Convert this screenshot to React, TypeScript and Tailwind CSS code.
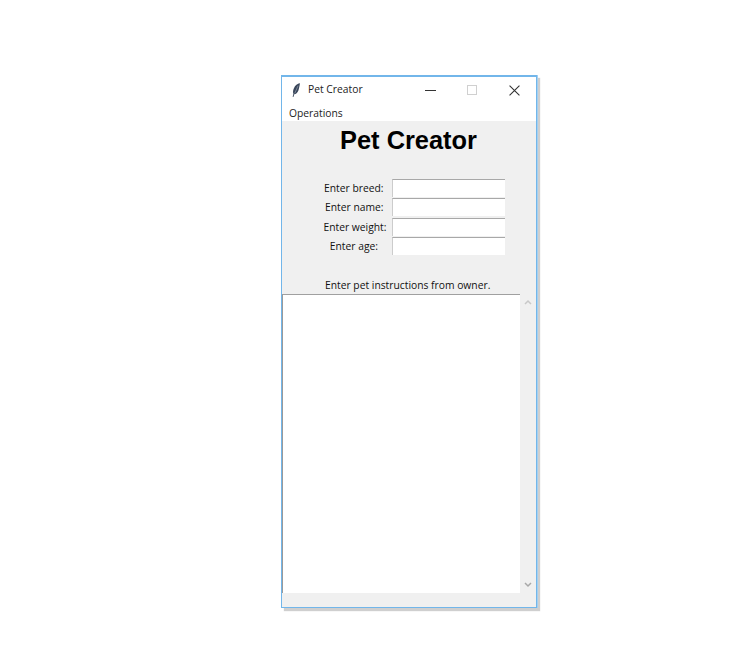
const ui = { fontFamily: '"Open Sans", "Noto Sans", sans-serif' };

function Field({ label, offset }: { label: string; offset: string }) {
  return (
    <div className="flex h-[19.5px] items-center">
      <div className="relative w-[111px] text-right text-[10.3px] leading-none text-[#111]">
        <span className={offset}>{label}</span>
      </div>
      <div className="ml-[-1px] h-[18px] w-[113px] border-t border-l border-t-[#a8a8a8] border-l-[#cccccc] bg-white" />
    </div>
  );
}

export default function App() {
  return (
    <div className="h-[654px] w-[756px] overflow-hidden bg-white pt-[75px] pl-[281px]" style={ui}>
      <div className="flex h-[533px] w-[256px] flex-col border border-t-2 border-[#72b6ea] bg-white shadow-[1px_0_0_#a5d0f0,3px_3px_1px_rgba(130,130,130,0.38)]">
        <div className="flex h-[24px] shrink-0 items-center pt-[2px] text-[10.3px] text-[#222]">
          <svg viewBox="0 0 10 16" className="ml-[10px] h-[16px] w-[9px]" fill="#39465a">
            <path d="M8.8 0.3C6.2 0.9 3.4 3 2 6.2 1 8.6 .9 10.6 1.6 12.2L.7 15.6l.9.2.9-3c1.9-.1 3.6-1.7 4.6-4.3.9-2.6 1.5-5.8 1.7-8.5z" />
            <path d="M6.8 3.2 3 11.8" stroke="#c9d4e2" strokeWidth=".5" fill="none" />
          </svg>
          <span className="ml-[7px]">Pet Creator</span>
          <div className="ml-auto flex items-center">
            <div className="mr-[31px] h-px w-[11px] bg-[#333]" />
            <div className="mr-[32px] h-[10px] w-[10px] border border-[#d0d0d0]" />
            <svg viewBox="0 0 10 10" className="mr-[16px] h-[11px] w-[11px]" stroke="#333" strokeWidth="1" fill="none">
              <path d="M0.5 0.5l9 9M9.5 0.5l-9 9" />
            </svg>
          </div>
        </div>
        <div className="flex h-[20px] shrink-0 items-center pt-[6px] pl-[7px] text-[10.3px] text-[#222]">Operations</div>
        <div className="flex min-h-0 flex-1 flex-col bg-[#f0f0f0]">
          <h1 className="mt-[4px] pr-px text-center text-[25.4px] leading-[30px] font-bold text-black" style={{ fontFamily: '"Liberation Sans", sans-serif' }}>
            Pet Creator
          </h1>
          <div className="mt-[23px] flex flex-col">
            <Field label="Enter breed:" offset="relative right-[9.5px]" />
            <Field label="Enter name:" offset="relative right-[9.5px]" />
            <Field label="Enter weight:" offset="relative right-[6.5px]" />
            <Field label="Enter age:" offset="relative right-[15px]" />
          </div>
          <div className="mt-[20px] h-[18px] pl-[43px] text-[10.3px] leading-[18px] text-[#111]">Enter pet instructions from owner.</div>
          <div className="flex h-[299px] shrink-0">
            <div className="w-[238px] border-t border-l border-t-[#a0a0a0] border-l-[#9a9a9a] bg-white" />
            <div className="flex flex-1 flex-col items-center justify-between py-[5px]">
              <svg viewBox="0 0 8 6" className="h-[6px] w-[8px]" fill="none" stroke="#c8c8c8" strokeWidth="1.5"><path d="M1 5l3-3 3 3" /></svg>
              <svg viewBox="0 0 8 6" className="h-[6px] w-[8px]" fill="none" stroke="#a8a8a8" strokeWidth="1.5"><path d="M1 1l3 3 3-3" /></svg>
            </div>
          </div>
        </div>
      </div>
    </div>
  );
}
